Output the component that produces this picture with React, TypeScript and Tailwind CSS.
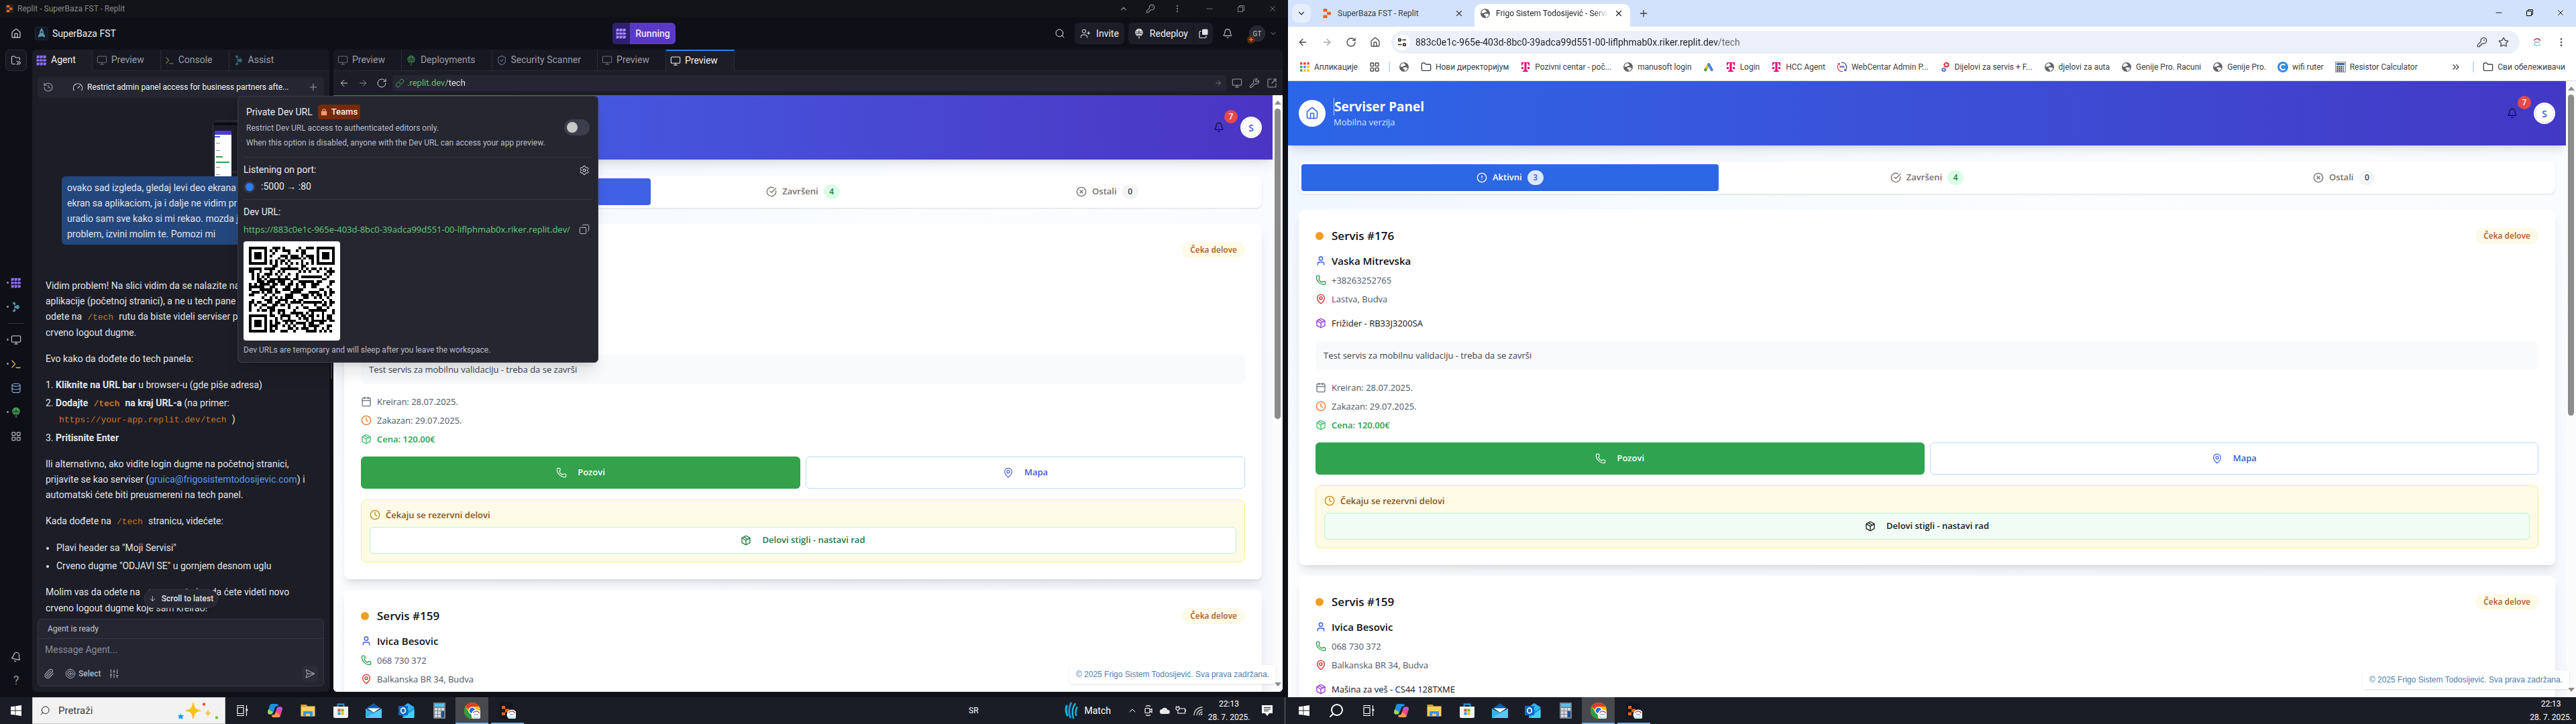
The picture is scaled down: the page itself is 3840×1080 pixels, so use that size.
import React, { useMemo } from "react";
import type { ReactNode } from "react";
import {
  ArrowDown, ArrowLeft, ArrowRight, Bell, Calendar, ChevronDown, ChevronUp, ChevronsRight, CircleAlert, CircleCheckBig,
  CircleX, Clock, Copy, Database, EllipsisVertical, Folder, Gauge, History, House, KeyRound, LayoutGrid, Link,
  MapPin, Minus, Monitor, Package, Paperclip, Phone, Plus, RotateCw, Search, SendHorizontal, Settings, ShieldCheck,
  SlidersVertical, SquareArrowOutUpRight, Star, Target, User, UserPlus, Wrench, X,
} from "lucide-react";

/* ---------- QR code (version 4, error level L, byte mode) ---------- */

const QR_SIZE = 33;

function gfMultiply(x: number, y: number): number {
  let z = 0;
  for (let i = 7; i >= 0; i--) {
    z = (z << 1) ^ ((z >>> 7) * 0x11d);
    z ^= ((y >>> i) & 1) * x;
  }
  return z;
}

function errorCorrection(data: number[], degree: number): number[] {
  const divisor: number[] = new Array(degree).fill(0);
  divisor[degree - 1] = 1;
  let root = 1;
  for (let i = 0; i < degree; i++) {
    for (let j = 0; j < degree; j++) {
      divisor[j] = gfMultiply(divisor[j], root);
      if (j + 1 < degree) divisor[j] ^= divisor[j + 1];
    }
    root = gfMultiply(root, 2);
  }
  const result: number[] = new Array(degree).fill(0);
  for (const b of data) {
    const factor = b ^ (result.shift() as number);
    result.push(0);
    divisor.forEach((c, i) => (result[i] ^= gfMultiply(c, factor)));
  }
  return result;
}

const MASKS: ((x: number, y: number) => boolean)[] = [
  (x, y) => (x + y) % 2 === 0,
  (_x, y) => y % 2 === 0,
  (x) => x % 3 === 0,
  (x, y) => (x + y) % 3 === 0,
  (x, y) => (Math.floor(x / 3) + Math.floor(y / 2)) % 2 === 0,
  (x, y) => ((x * y) % 2) + ((x * y) % 3) === 0,
  (x, y) => (((x * y) % 2) + ((x * y) % 3)) % 2 === 0,
  (x, y) => (((x + y) % 2) + ((x * y) % 3)) % 2 === 0,
];

function penalty(m: boolean[][]): number {
  let score = 0;
  const n = QR_SIZE;
  const lines: boolean[][] = [...m, ...m.map((_, x) => m.map((row) => row[x]))];
  for (const line of lines) {
    let run = 1;
    for (let i = 1; i <= n; i++) {
      if (i < n && line[i] === line[i - 1]) run++;
      else {
        if (run >= 5) score += run - 2;
        run = 1;
      }
    }
    const s = "0000" + line.map((v) => (v ? "1" : "0")).join("") + "0000";
    for (let i = 0; i + 11 <= s.length; i++) {
      const w = s.slice(i, i + 11);
      if (w === "10111010000" || w === "00001011101") score += 40;
    }
  }
  let dark = 0;
  for (let y = 0; y < n; y++)
    for (let x = 0; x < n; x++) {
      if (m[y][x]) dark++;
      if (x + 1 < n && y + 1 < n && m[y][x] === m[y][x + 1] && m[y][x] === m[y + 1][x] && m[y][x] === m[y + 1][x + 1]) score += 3;
    }
  const total = n * n;
  return score + (Math.ceil(Math.abs(dark * 20 - total * 10) / total) - 1) * 10;
}

function encodeQr(text: string): boolean[][] {
  const n = QR_SIZE;
  const bits: number[] = [];
  const push = (v: number, len: number) => {
    for (let i = len - 1; i >= 0; i--) bits.push((v >>> i) & 1);
  };
  push(4, 4);
  push(text.length, 8);
  for (const ch of text) push(ch.charCodeAt(0), 8);
  push(0, Math.min(4, 640 - bits.length));
  while (bits.length % 8) bits.push(0);
  const data: number[] = [];
  for (let i = 0; i < bits.length; i += 8) data.push(parseInt(bits.slice(i, i + 8).join(""), 2));
  for (let pad = 0xec; data.length < 80; pad ^= 0xec ^ 0x11) data.push(pad);
  const all = [...data, ...errorCorrection(data, 20)];

  const base: boolean[][] = Array.from({ length: n }, () => new Array(n).fill(false));
  const fixed: boolean[][] = Array.from({ length: n }, () => new Array(n).fill(false));
  const put = (m: boolean[][], x: number, y: number, v: boolean) => {
    if (x < 0 || y < 0 || x >= n || y >= n) return;
    m[y][x] = v;
    fixed[y][x] = true;
  };
  for (let i = 0; i < n; i++) {
    put(base, 6, i, i % 2 === 0);
    put(base, i, 6, i % 2 === 0);
  }
  for (const [cx, cy] of [[3, 3], [n - 4, 3], [3, n - 4]])
    for (let dy = -4; dy <= 4; dy++)
      for (let dx = -4; dx <= 4; dx++) {
        const d = Math.max(Math.abs(dx), Math.abs(dy));
        put(base, cx + dx, cy + dy, d !== 2 && d !== 4);
      }
  for (let dy = -2; dy <= 2; dy++)
    for (let dx = -2; dx <= 2; dx++) put(base, 26 + dx, 26 + dy, Math.max(Math.abs(dx), Math.abs(dy)) !== 1);

  const format = (m: boolean[][], mask: number) => {
    const d = (1 << 3) | mask;
    let rem = d;
    for (let i = 0; i < 10; i++) rem = (rem << 1) ^ ((rem >>> 9) * 0x537);
    const f = ((d << 10) | rem) ^ 0x5412;
    const bit = (i: number) => ((f >>> i) & 1) === 1;
    for (let i = 0; i <= 5; i++) put(m, 8, i, bit(i));
    put(m, 8, 7, bit(6));
    put(m, 8, 8, bit(7));
    put(m, 7, 8, bit(8));
    for (let i = 9; i < 15; i++) put(m, 14 - i, 8, bit(i));
    for (let i = 0; i < 8; i++) put(m, n - 1 - i, 8, bit(i));
    for (let i = 8; i < 15; i++) put(m, 8, n - 15 + i, bit(i));
    put(m, 8, n - 8, true);
  };
  format(base, 0);

  let k = 0;
  for (let right = n - 1; right >= 1; right -= 2) {
    if (right === 6) right = 5;
    for (let v = 0; v < n; v++)
      for (let j = 0; j < 2; j++) {
        const x = right - j;
        const y = ((right + 1) & 2) === 0 ? n - 1 - v : v;
        if (!fixed[y][x] && k < all.length * 8) {
          base[y][x] = ((all[k >>> 3] >>> (7 - (k & 7))) & 1) === 1;
          k++;
        }
      }
  }
  let best = base;
  let bestScore = Infinity;
  const free = fixed.map((row) => row.map((v) => !v));
  for (let mask = 0; mask < 8; mask++) {
    const m = base.map((row, y) => row.map((v, x) => (free[y][x] && MASKS[mask](x, y) ? !v : v)));
    format(m, mask);
    const s = penalty(m);
    if (s < bestScore) {
      bestScore = s;
      best = m;
    }
  }
  return best;
}

function QrCode({ value }: { value: string }) {
  const path = useMemo(
    () => encodeQr(value).map((row, y) => row.map((v, x) => (v ? `M${x} ${y}h1v1h-1z` : "")).join("")).join(""),
    [value],
  );
  return (
    <svg viewBox={`0 0 ${QR_SIZE} ${QR_SIZE}`} className="size-32" shapeRendering="crispEdges" role="img" aria-label="QR code">
      <path d={path} fill="#000" />
    </svg>
  );
}

/* ---------- Custom icons ---------- */

const ReplitLogo = ({ className = "" }: { className?: string }) => (
  <svg viewBox="0 0 16 16" className={className} fill="#f26207">
    <rect x="2.5" y="1" width="6" height="4.6" rx="1" />
    <rect x="8" y="5.7" width="6" height="4.6" rx="1" />
    <rect x="2.5" y="10.4" width="6" height="4.6" rx="1" />
  </svg>
);

const AgentIcon = ({ className = "", color = "#8b6df5" }: { className?: string; color?: string }) => (
  <svg viewBox="0 0 16 16" className={className} fill={color}>
    {[0, 1, 2].map((c) => [0, 1, 2].map((r) => (
      <path key={`${c}${r}`} d={r === 1 ? `M${0.6 + c * 5} 5.8l4.6 1.2v2l-4.6 1.2z` : `M${0.6 + c * 5} ${0.8 + r * 5.2}h4.2v3.2l-2.1 1h-2.1z`} />
    )))}
  </svg>
);

const AssistIcon = ({ className = "" }: { className?: string }) => (
  <svg viewBox="0 0 16 16" className={className} fill="#4c93a8">
    <path d="M3 .8h3l1.6 2.4L6 5.4 4.2 4 3 2.8zM3 15.2h3l1.6-2.4L6 10.6 4.2 12 3 13.2z" />
    <path d="M4.5 6h3.200l3.300-1.600L13.500 8 11 11.600 7.700 10H4.500L6.300 8z" />
  </svg>
);

const DeployIcon = ({ className = "" }: { className?: string }) => (
  <svg viewBox="0 0 16 16" className={className} fill="none" stroke="currentColor" strokeWidth="1.1" strokeLinecap="round" strokeLinejoin="round">
    <path d="M5.5 11.1A5.2 5.2 0 1 1 10.5 11.1M2.9 6h10.2M5.7 11c-1-2.900-1-7.200 2.300-9.900 3.300 2.700 3.300 7 2.300 9.900M3.800 3.600h8.400M8 15.500V8.200M5.900 10.200 8 8l2.100 2.200" />
  </svg>
);

const ShellIcon = ({ className = "" }: { className?: string }) => (
  <svg viewBox="0 0 16 16" className={className} fill="none" stroke="currentColor" strokeWidth="1.3" strokeLinecap="round" strokeLinejoin="round">
    <path d="M2 3l4.5 5L2 13M8 13.5h6" />
  </svg>
);

const Restore = ({ className = "" }: { className?: string }) => (
  <svg viewBox="0 0 12 12" className={className} fill="none" stroke="currentColor">
    <path d="M1.5 3.5h7v7h-7zM3.5 3.5v-2h7v7h-2" />
  </svg>
);

const Globe = () => (
  <svg viewBox="0 0 16 16" className="size-4 shrink-0">
    <circle cx="8" cy="8" r="7" fill="#5f6368" />
    <path d="M7 2.2c2 .3 1.2 1.8 3 2.3 1 .4-.2 1.6-1.5 1.6-1 0-1.2 1.3-2.5 1.3H2.5C2.4 5 4.5 2.500 7 2.200zM8.500 8.500h3.200c1 .2.7 1.500 1.700 1.500-.6 2-2.400 3.700-4.700 3.900-.5-.8.4-1.500-.2-2.300-.6-.7-2-.4-2-1.600 0-1 1-1.500 2-1.500z" fill="#fff" />
  </svg>
);

const Telekom = () => (
  <svg viewBox="0 0 16 16" className="size-4 shrink-0" fill="#e20074">
    <path d="M2 1h12v5h-1.2C12.6 3.6 11.8 2.3 9.5 2.1V11c0 2 .5 2.6 2.5 2.8V15H4v-1.2c2-.2 2.5-.8 2.5-2.8V2.1C4.2 2.3 3.4 3.6 3.2 6H2zM2 8h3v3H2zM11 8h3v3h-3z" />
  </svg>
);

const AppsDots = () => (
  <svg viewBox="0 0 16 16" className="size-4 shrink-0">
    {["#ea4335", "#ea4335", "#ea4335", "#34a853", "#4285f4", "#fbbc04", "#34a853", "#fbbc04", "#fbbc04"].map((c, i) => (
      <rect key={i} x={1 + (i % 3) * 5.2} y={1 + Math.floor(i / 3) * 5.2} width="3.4" height="3.4" fill={c} />
    ))}
  </svg>
);

const GoogleAds = () => (
  <svg viewBox="0 0 16 16" className="size-4 shrink-0" strokeLinecap="round" strokeWidth="4">
    <path d="M8 4L3.5 12" stroke="#fbbc04" />
    <path d="M8.2 4l4.5 8.2" stroke="#4285f4" />
    <circle cx="3.3" cy="12.3" r="2.2" fill="#34a853" />
  </svg>
);

const RoundLogo = ({ className = "" }: { className?: string }) => (
  <svg viewBox="0 0 16 16" className={className}>
    <circle cx="8" cy="8" r="8" fill="#fff" />
    <path d="M3.5 5.5A5.2 5.2 0 0 1 12.8 6" fill="none" stroke="#c2334d" strokeWidth="1.5" />
    <path d="M3.2 9.8A5.2 5.2 0 0 0 12.5 10.5" fill="none" stroke="#7fd3e0" strokeWidth="1.5" />
    <path d="M4.5 7.9h7" stroke="#6a86c9" strokeWidth="1.6" strokeDasharray="1.6 .6" />
  </svg>
);

const FstLogo = () => (
  <svg viewBox="0 0 16 16" className="size-4 shrink-0" fill="none">
    <path d="M9 14.5A6.7 6.7 0 0 1 3 3.5M1.5 3l2.5-.5.5 2.6" stroke="#e2454f" strokeWidth="1.3" />
    <path d="M7 1.5a6.7 6.7 0 0 1 6 11M14.5 13l-2.5.5-.5-2.5" stroke="#4653a8" strokeWidth="1.3" />
    <path d="M4.6 7.5h7" stroke="#4653a8" strokeWidth="2.6" strokeDasharray="1.9 .6" />
  </svg>
);

const Gears = () => (
  <svg viewBox="0 0 16 16" className="size-4 shrink-0" fill="none">
    <circle cx="9.5" cy="4.8" r="2.8" stroke="#e2454f" strokeWidth="2" />
    <circle cx="9.5" cy="4.8" r="4" stroke="#e2454f" strokeWidth="1.2" strokeDasharray="1.5 1.6" />
    <circle cx="5.5" cy="12" r="2" stroke="#5577c8" strokeWidth="1.7" />
    <circle cx="5.5" cy="12" r="3" stroke="#5577c8" strokeWidth="1.2" strokeDasharray="1.2 1.2" />
  </svg>
);

const CircleC = () => (
  <svg viewBox="0 0 16 16" className="size-4 shrink-0">
    <circle cx="8" cy="8" r="8" fill="#2d8cf0" />
    <path d="M11.2 5.5a4 4 0 1 0 0 5" fill="none" stroke="#fff" strokeWidth="2" />
  </svg>
);

const CalcSmall = () => (
  <svg viewBox="0 0 16 16" className="size-4 shrink-0">
    <rect x=".5" y=".5" width="15" height="15" fill="#eee" stroke="#8a8a8a" />
    <rect x="2" y="2" width="12" height="3" fill="#356aa0" />
    {[0, 1, 2].map((r) => [0, 1, 2, 3].map((c) => (
      <rect key={`${r}${c}`} x={2.2 + c * 3} y={6.5 + r * 3} width="2" height="2" fill={c === 3 ? "#356aa0" : "#222"} />
    )))}
  </svg>
);

/* ---------- Service card ---------- */

type Theme = {
  primaryBg: string; primaryText: string; banner: string; call: string; warnBox: string; partsBtn: string; partsIcon: string;
};

const softTheme: Theme = {
  primaryBg: "bg-[#3f61e6]",
  primaryText: "text-[#4459dd]",
  banner: "bg-linear-to-r from-[#3f63e8] to-[#4b34c4]",
  call: "bg-[#33a24b]",
  warnBox: "bg-[#fdfbe8] border-[#faf089]",
  partsBtn: "bg-white border-[#bbf2cc] text-[#237a3d]",
  partsIcon: "text-[#237a3d]",
};

const vividTheme: Theme = {
  primaryBg: "bg-[#2c67e6]",
  primaryText: "text-[#2f5fe0]",
  banner: "bg-linear-to-r from-[#2b66e8] to-[#4338c6]",
  call: "bg-[#2fa34f]",
  warnBox: "bg-[#fefae6] border-[#fce98a]",
  partsBtn: "bg-[#f1fcf4] border-[#bff3d1] text-[#17191c]",
  partsIcon: "text-[#17191c]",
};

type Service = { id: number; name: string; phone: string; address: string; device: string; note: string };

const services: Service[] = [
  { id: 176, name: "Vaska Mitrevska", phone: "+38263252765", address: "Lastva, Budva", device: "Frižider - RB33J3200SA", note: "Test servis za mobilnu validaciju - treba da se završi" },
  { id: 159, name: "Ivica Besovic", phone: "068 730 372", address: "Balkanska BR 34, Budva", device: "Mašina za veš - CS44 128TXME", note: "Ne radi centrifuga" },
];

const Row = ({ icon, children, className = "" }: { icon: ReactNode; children: ReactNode; className?: string }) => (
  <div className={`flex items-center gap-2 text-[13px] leading-5 ${className}`}>
    {icon}
    <span>{children}</span>
  </div>
);

function ServiceCard({ s, t }: { s: Service; t: Theme }) {
  return (
    <article className="rounded-lg border border-white bg-white p-6 shadow-lg">
      <div className="mb-3 flex items-center justify-between">
        <div className="flex items-center gap-3">
          <span className="size-3 rounded-full bg-[#f29c20]" />
          <h2 className="text-[17px] leading-7 font-semibold text-[#0e1116]">Servis #{s.id}</h2>
        </div>
        <span className="rounded-full bg-[#fefae8] px-3 text-[12px] leading-6 font-semibold text-[#b3591c]">Čeka delove</span>
      </div>
      <div className="flex items-center gap-2">
        <User className={`size-4 ${t.primaryText}`} />
        <span className="text-[15px] leading-[22px] font-semibold text-[#0e1116]">{s.name}</span>
      </div>
      <Row className="mt-2 text-[#4b5563]" icon={<Phone className="size-4 text-[#22a04a]" />}>{s.phone}</Row>
      <Row className="mt-2 text-[#4b5563]" icon={<MapPin className="size-4 text-[#dc2626]" />}>{s.address}</Row>
      <Row className="mt-4 font-medium text-[#0e1116]" icon={<Package className="size-4 text-[#9333ea]" />}>{s.device}</Row>
      <p className="mt-4 rounded-lg bg-[#f9fafb] p-3 text-[13px] leading-5 text-[#374151]">{s.note}</p>
      <Row className="mt-4 text-[#4b5563]" icon={<Calendar className="size-4 text-[#6b7280]" />}>Kreiran: 28.07.2025.</Row>
      <Row className="mt-2 text-[#4b5563]" icon={<Clock className="size-4 text-[#f0762a]" />}>Zakazan: 29.07.2025.</Row>
      <Row className="mt-2 font-semibold text-[#27a04b]" icon={<Package className="size-4 text-[#3cc069]" />}>Cena: 120.00€</Row>
      <div className="mt-4 grid grid-cols-2 gap-2">
        <button className={`flex h-12 items-center justify-center gap-4 rounded-md text-[13px] font-semibold text-white ${t.call}`}>
          <Phone className="size-4" strokeWidth={1.7} />Pozovi
        </button>
        <button className={`flex h-12 items-center justify-center gap-4 rounded-md border border-[#bfdbfe] text-[13px] font-semibold ${t.primaryText}`}>
          <MapPin className="size-4" strokeWidth={1.7} />Mapa
        </button>
      </div>
      <div className={`mt-4 rounded-lg border p-3 ${t.warnBox}`}>
        <Row className="font-semibold text-[#8a5316]" icon={<Clock className="size-4 text-[#c78a12]" />}>Čekaju se rezervni delovi</Row>
        <button className={`mt-2 flex h-10 w-full items-center justify-center gap-4 rounded-md border text-[13px] font-semibold ${t.partsBtn}`}>
          <Package className={`size-4 ${t.partsIcon}`} />Delovi stigli - nastavi rad
        </button>
      </div>
    </article>
  );
}

function Counter({ icon, label, count, className, badge }: { icon: ReactNode; label: string; count: number; className: string; badge: string }) {
  return (
    <button role="tab" className={`flex h-10 items-center justify-center gap-2 rounded-sm text-[13px] font-semibold ${className}`}>
      {icon}
      {label}
      <span className={`w-6 rounded-full text-center text-[12px] leading-[22px] ${badge}`}>{count}</span>
    </button>
  );
}

function ServicePanel({ t }: { t: Theme }) {
  return (
    <div className="relative flex min-h-0 flex-1 overflow-hidden bg-white font-['Open_Sans','Noto_Sans',sans-serif]">
      <div className="min-w-0 flex-1 overflow-hidden bg-linear-to-br from-[#eef5ff] via-[#fbfdff] via-40% to-[#f6f7fd]">
        <header className={`flex h-24 items-center justify-between px-4 shadow-lg ${t.banner}`}>
          <div className="flex items-center gap-3">
            <span className="flex size-10 items-center justify-center rounded-full bg-white">
              <House className={`size-5 ${t.primaryText}`} strokeWidth={1.8} />
            </span>
            <div>
              <h1 className="border-l border-white/70 text-[19px] leading-[26px] font-bold text-white">Serviser Panel</h1>
              <p className="text-[13px] leading-5 text-[#d5e3fd]">Mobilna verzija</p>
            </div>
          </div>
          <div className="flex items-center gap-2">
            <button aria-label="Obaveštenja" className="relative flex size-10 items-center justify-center text-[#0c0f1c]">
              <Bell className="size-4" strokeWidth={1.8} />
              <span className="absolute -top-1.5 -right-2 size-5 rounded-full bg-[#e94848] text-center text-[12px] leading-5 font-semibold text-white">7</span>
            </button>
            <button aria-label="Profil" className={`ml-1 size-8 rounded-full bg-white p-0.5 text-[14px] font-semibold ${t.primaryText}`}>
              <span className="flex size-7 items-center justify-center rounded-full border border-dashed border-[#c9d2f5]">S</span>
            </button>
          </div>
        </header>
        <main className="flex flex-col gap-4 px-4 pt-6">
          <div role="tablist" className="mb-2 grid grid-cols-3 rounded-lg bg-white p-1 shadow-sm">
            <Counter icon={<CircleAlert className="size-4" />} label="Aktivni" count={3} className={`text-white ${t.primaryBg}`} badge="bg-[#dbe8fe] text-[#3a5fc9]" />
            <Counter icon={<CircleCheckBig className="size-4" />} label="Završeni" count={4} className="text-[#77716c]" badge="bg-[#dcfce7] text-[#23803f]" />
            <Counter icon={<CircleX className="size-4" />} label="Ostali" count={0} className="text-[#77716c]" badge="bg-[#f3f4f6] text-[#374151]" />
          </div>
          {services.map((s) => <ServiceCard key={s.id} s={s} t={t} />)}
        </main>
      </div>
      <div className="flex w-[15px] shrink-0 flex-col items-center bg-[#fbfbfb] py-2">
        <svg viewBox="0 0 10 6" className="h-1.5 w-2.5" fill="#8b8b8b"><path d="M5 0l5 6H0z" /></svg>
        <div className="mt-1.5 h-[53%] w-[9px] rounded-full bg-[#8b8b8b]" />
        <svg viewBox="0 0 10 6" className="mt-auto h-1.5 w-2.5" fill="#8b8b8b"><path d="M5 6l5-6H0z" /></svg>
      </div>
      <footer className="absolute right-2.5 bottom-3 rounded-sm bg-white/90 px-2.5 py-1 font-['Liberation_Sans',sans-serif] text-[12px] leading-5 text-[#4a7fb5] shadow-sm">
        © 2025 Frigo Sistem Todosijević. Sva prava zadržana.
      </footer>
    </div>
  );
}

/* ---------- Workspace window ---------- */

function WorkTab({ icon, label, active, accent }: { icon: ReactNode; label: string; active?: boolean; accent?: boolean }) {
  return (
    <button
      className={`flex h-8 items-center gap-1.5 border-r pr-6 pl-1.5 text-[14px] whitespace-nowrap ${active ? "border-b border-r-[#2b2c38] border-b-[#1c1d26] bg-[#1c1d26] text-[#f0f1f5]" : "border-b border-[#2b2c38] text-[#9b9dac]"} ${accent ? "border-t-2 border-t-[#2f7cf0]" : ""}`}
    >
      {icon}
      {label}
    </button>
  );
}

const Code = ({ children }: { children: ReactNode }) => (
  <code className="mx-1 px-1 font-['Liberation_Mono',monospace] text-[13px] text-[#c9752a]">{children}</code>
);

function AgentPanel() {
  return (
    <section className="flex w-[443px] shrink-0 flex-col overflow-hidden rounded-md bg-[#1c1d26]">
      <div className="flex shrink-0 bg-[#171821]">
        <WorkTab icon={<AgentIcon className="size-4" />} label="Agent" active />
        <WorkTab icon={<Monitor className="size-4 text-[#6b6d7c]" strokeWidth={1.6} />} label="Preview" />
        <WorkTab icon={<ShellIcon className="size-3.5 text-[#7d7440]" />} label="Console" />
        <div className="flex flex-1 items-center border-b border-[#2b2c38]">
          <button className="flex items-center gap-1.5 pl-1.5 text-[14px] text-[#9b9dac]"><AssistIcon className="size-4 opacity-60" />Assist</button>
        </div>
      </div>
      <div className="mx-2 mt-2 flex h-8 shrink-0 items-center rounded-md bg-[#252631] pr-2 pl-2 text-[#d8d9e0]">
        <button aria-label="History"><History className="size-4 text-[#9b9dac]" strokeWidth={1.6} /></button>
        <Gauge className="mr-1.5 ml-7 size-4" strokeWidth={1.6} />
        <span className="flex-1 truncate text-[12px] text-[#f0f1f5]">Restrict admin panel access for business partners afte...</span>
        <button aria-label="New chat"><Plus className="size-4 text-[#9b9dac]" strokeWidth={1.6} /></button>
      </div>
      <div className="relative min-h-0 flex-1 overflow-hidden px-5 text-[14px] leading-[23px] whitespace-nowrap text-[#e2e3ea]">
        <div className="mt-[34px] ml-[249px] h-[77px] w-[110px] rounded-md border border-[#363744] bg-[#1c1d26] pt-0.5">
          <div className="h-1 bg-[#0d0e14]" />
          <div className="mt-2 ml-0.5 w-[25px] bg-white pb-1">
            <div className="h-1.5 bg-[#4a3fd0]" />
            <div className="mt-0.5 h-0.5 w-2 bg-[#3f61e6]" />
            <div className="mt-2 ml-0.5 h-3 w-1.5 border-y border-dashed border-[#888]" />
            <div className="mt-2 ml-0.5 h-0.5 w-2.5 bg-[#33a24b]" />
            <div className="mt-1.5 ml-0.5 h-0.5 w-5 bg-[#33a24b]" />
            <div className="mt-1.5 ml-0.5 h-3 w-1.5 border-y border-dashed border-[#888]" />
          </div>
        </div>
        <div className="mt-1.5 ml-6 rounded-md bg-[#23477d] px-2 pt-1.5 pb-1">
          ovako sad izgleda, gledaj levi deo ekrana<br />
          ekran sa aplikaciom, ja i dalje ne vidim pr<br />
          uradio sam sve kako si mi rekao. mozda j<br />
          problem, izvini molim te. Pomozi mi
        </div>
        <div className="mt-[50px] flex flex-col gap-4">
          <p>
            Vidim problem! Na slici vidim da se nalazite na<br />
            aplikacije (početnoj stranici), a ne u tech pane<br />
            odete na<Code>/tech</Code>rutu da biste videli serviser p<br />
            crveno logout dugme.
          </p>
          <p>Evo kako da dođete do tech panela:</p>
          <ol className="flex flex-col gap-1">
            <li>1. <b>Kliknite na URL bar</b> u browser-u (gde piše adresa)</li>
            <li>
              2. <b>Dodajte<Code>/tech</Code>na kraj URL-a</b> (na primer:<br />
              <span className="pl-3"><Code>https://your-app.replit.dev/tech</Code>)</span>
            </li>
            <li>3. <b>Pritisnite Enter</b></li>
          </ol>
          <p>
            Ili alternativno, ako vidite login dugme na početnoj stranici,<br />
            prijavite se kao serviser (<a href="mailto:gruica@frigosistemtodosijevic.com" className="text-[#5a9bf0]">gruica@frigosistemtodosijevic.com</a>) i<br />
            automatski ćete biti preusmereni na tech panel.
          </p>
          <p>Kada dođete na<Code>/tech</Code>stranicu, videćete:</p>
          <ul className="flex list-disc flex-col gap-1 pl-4">
            <li>Plavi header sa "Moji Servisi"</li>
            <li>Crveno dugme "ODJAVI SE" u gornjem desnom uglu</li>
          </ul>
          <p>
            Molim vas da odete na<Code>/tech</Code>rutu i onda ćete videti novo<br />
            crveno logout dugme koje sam kreirao!
          </p>
        </div>
        <button className="absolute bottom-4 left-1/2 flex h-7 -translate-x-1/2 items-center gap-2 rounded-full border border-[#363744] bg-[#252631] px-1.5 text-[12px] font-medium text-[#e2e3ea] shadow-md">
          <ArrowDown className="size-3" strokeWidth={1.6} />Scroll to latest
        </button>
      </div>
      <form className="mx-2 mb-2 flex shrink-0 flex-col rounded-md border border-[#363744] bg-[#252631]">
        <div className="border-b border-[#363744] px-3.5 py-1 text-[12px] leading-5 text-[#c3c5d0]">Agent is ready</div>
        <textarea aria-label="Message Agent" placeholder="Message Agent..." rows={1} className="resize-none px-2.5 pt-1 text-[14px] leading-6 text-[#e2e3ea] placeholder-[#8a8c9b] outline-none" />
        <div className="flex items-center gap-3 px-2 pt-3 pb-1.5 text-[12px] text-[#b4b6c3]">
          <button type="button" aria-label="Attach"><Paperclip className="size-4" strokeWidth={1.6} /></button>
          <button type="button" className="flex items-center gap-1 pl-1 font-medium"><Target className="size-4" strokeWidth={1.5} />Select</button>
          <button type="button" aria-label="Options"><SlidersVertical className="size-4" strokeWidth={1.6} /></button>
          <button type="submit" aria-label="Send" className="ml-auto flex size-6 items-center justify-center rounded-sm bg-[#2b2c38]"><SendHorizontal className="size-4" strokeWidth={1.5} /></button>
        </div>
      </form>
    </section>
  );
}

const DEV_URL = "https://883c0e1c-965e-403d-8bc0-39adca99d551-00-liflphmab0x.riker.replit.dev/";

function DevUrlPopup() {
  return (
    <div role="dialog" aria-label="Dev URL" className="absolute top-[143px] left-[354px] z-10 w-[538px] rounded-md border border-[#3b3c4a] bg-[#252630] px-2 pt-3 pb-1.5 text-[#e9eaf0] shadow-xl">
      <div className="flex items-center justify-between border-b border-[#363744] px-1 pb-2.5">
        <div>
          <div className="flex items-center gap-2 text-[14px] leading-[22px]">
            <label htmlFor="private-url">Private Dev URL</label>
            <span className="flex h-[22px] items-center gap-1.5 rounded-sm bg-[#752b0a] px-1 text-[13px] font-medium text-[#fff1ea]">
              <svg viewBox="0 0 12 12" className="size-2.5"><rect x="1" y="4.5" width="10" height="7.5" rx="1" fill="#f79a6b" /><path d="M3.5 5V3.5a2.5 2.5 0 0 1 5 0V5" fill="none" stroke="#f79a6b" strokeWidth="1.5" /></svg>
              Teams
            </span>
          </div>
          <p className="mt-0.5 text-[12px] leading-[22px] text-[#b9bbc8]">
            Restrict Dev URL access to authenticated editors only.<br />
            When this option is disabled, anyone with the Dev URL can access your app preview.
          </p>
        </div>
        <input id="private-url" type="checkbox" role="switch" className="relative h-6 w-[38px] appearance-none rounded-full bg-[#3d3e4c] before:absolute before:top-1 before:left-1 before:size-4 before:rounded-full before:bg-[#c8c8c8]" />
      </div>
      <div className="border-b border-[#363744] pt-1.5 pb-1.5 text-[14px] leading-[25px]">
        <div className="flex items-center justify-between pr-1"><span>Listening on port:</span><button aria-label="Port settings"><Settings className="size-4" strokeWidth={1.5} /></button></div>
        <label className="flex items-center gap-2">
          <input type="radio" name="port" defaultChecked className="size-[18px] appearance-none rounded-full border-[3px] border-[#363744] bg-[#2f7cf0]" />
          :5000 → :80
        </label>
      </div>
      <div className="pt-1.5 text-[14px] leading-6">Dev URL:</div>
      <div className="flex items-center justify-between pr-1">
        <a href={DEV_URL} className="font-['Open_Sans',sans-serif] text-[13px] leading-7 text-[#62d178]">{DEV_URL}</a>
        <button aria-label="Copy URL"><Copy className="size-4 -scale-x-100 text-[#b9bbc8]" strokeWidth={1.5} /></button>
      </div>
      <div className="mt-1 flex w-36 justify-center rounded-sm bg-white pt-2 pb-3"><QrCode value={DEV_URL} /></div>
      <p className="mt-0.5 text-[12px] leading-6 text-[#b9bbc8]">Dev URLs are temporary and will sleep after you leave the workspace.</p>
    </div>
  );
}

function SideItem({ children, dot, label }: { children: ReactNode; dot?: boolean; label: string }) {
  return (
    <button aria-label={label} className="flex h-9 w-full items-center">
      <span className={`ml-2.5 size-[3px] rounded-full ${dot ? "bg-[#9b9dac]" : ""}`} />
      <span className="ml-[3px]">{children}</span>
    </button>
  );
}

function Sidebar() {
  return (
    <nav className="flex w-12 shrink-0 flex-col items-center text-[#d3d5df]">
      <button aria-label="Files" className="flex size-8 items-center justify-center rounded-md border border-[#2b2c38] bg-[#171821]">
        <svg viewBox="0 0 16 16" className="size-4" fill="none" stroke="currentColor" strokeWidth="1.1" strokeLinejoin="round" strokeLinecap="round"><path d="M6.5 13.5H3A1.5 1.5 0 0 1 1.5 12V3A1 1 0 0 1 2.5 2h3.2L7.5 4H12a1.5 1.5 0 0 1 1.5 1.5V7M9 9l2.5 2.8L9 14.5M12 9l2.5 2.8L12 14.5" /></svg>
      </button>
      <div className="my-auto flex w-full flex-col pt-1">
        <SideItem label="Agent" dot><AgentIcon className="size-4" /></SideItem>
        <SideItem label="Assistant" dot><AssistIcon className="size-4" /></SideItem>
        <div className="mx-3 my-1.5 h-px bg-[#363744]" />
        <SideItem label="Preview" dot><Monitor className="size-4" strokeWidth={1.6} /></SideItem>
        <SideItem label="Shell" dot><ShellIcon className="size-4 text-[#d6c25a]" /></SideItem>
        <SideItem label="Database"><Database className="size-4 text-[#8fb8e8]" strokeWidth={1.6} /></SideItem>
        <SideItem label="Deployments" dot><DeployIcon className="size-4 text-[#4fb55f]" /></SideItem>
        <SideItem label="All tools"><LayoutGrid className="size-4" strokeWidth={1.6} /></SideItem>
      </div>
      <button aria-label="Announcements" className="flex h-9 items-center"><Bell className="size-4 rotate-12" strokeWidth={1.6} /></button>
      <button aria-label="Help" className="mb-0.5 flex h-8 items-center text-[18px] font-light">?</button>
    </nav>
  );
}

function PreviewPanel() {
  const mon = <Monitor className="size-4 text-[#6b6d7c]" strokeWidth={1.6} />;
  return (
    <section className="flex min-w-0 flex-1 flex-col overflow-hidden rounded-md bg-[#1c1d26]">
      <div className="flex shrink-0 bg-[#171821]">
        <WorkTab icon={mon} label="Preview" />
        <WorkTab icon={<DeployIcon className="size-4 text-[#3d7a4a]" />} label="Deployments" />
        <WorkTab icon={<ShieldCheck className="size-4 text-[#5f7291]" strokeWidth={1.6} />} label="Security Scanner" />
        <WorkTab icon={mon} label="Preview" />
        <WorkTab icon={<Monitor className="size-4" strokeWidth={1.6} />} label="Preview" active accent />
        <div className="flex-1 border-b border-[#2b2c38]" />
      </div>
      <div className="flex h-9 shrink-0 items-center gap-3 px-2 text-[#d3d5df]">
        <button aria-label="Back"><ArrowLeft className="size-4" strokeWidth={1.5} /></button>
        <button aria-label="Forward"><ArrowRight className="size-4 text-[#8a8c9b]" strokeWidth={1.5} /></button>
        <button aria-label="Reload"><RotateCw className="size-4" strokeWidth={1.5} /></button>
        <div className="-ml-1 flex h-6 flex-1 items-center gap-1 rounded-sm bg-[#252631] pr-1.5 pl-1">
          <Link className="size-3.5 text-[#4fae62]" strokeWidth={1.6} />
          <input aria-label="Preview address" defaultValue=".replit.dev/tech" className="flex-1 bg-linear-to-r from-[#62d178] from-[59px] to-[#f0f1f5] to-[59px] bg-clip-text text-[13px] text-transparent outline-none" />
          <ArrowRight className="size-3 text-[#8a8c9b]" strokeWidth={1.6} />
        </div>
        <div className="-ml-1 flex items-center gap-2.5 text-[#9b9dac]">
          <button aria-label="Devices"><Monitor className="size-4" strokeWidth={1.6} /></button>
          <button aria-label="Tools"><Wrench className="size-4" strokeWidth={1.6} /></button>
          <button aria-label="Open in new tab"><SquareArrowOutUpRight className="size-4" strokeWidth={1.6} /></button>
        </div>
      </div>
      <ServicePanel t={softTheme} />
    </section>
  );
}

function WorkspaceWindow() {
  const btn = "flex h-8 items-center rounded-md bg-[#1c1d26]";
  return (
    <div className="relative flex min-h-0 flex-1 flex-col bg-[#0e0f17] pb-2 font-['Roboto','Noto_Sans',sans-serif]">
      <div className="flex h-[26px] shrink-0 items-center bg-[#131417] pl-2 text-[12px] text-[#85868c]">
        <span className="mr-1.5 flex size-3 items-center justify-center bg-[#1f2633]"><ReplitLogo className="size-3" /></span>
        Replit - SuperBaza FST - Replit
        <div className="ml-auto flex items-center gap-[34px] pr-4">
          <ChevronUp className="-mr-2 size-3.5" />
          <KeyRound className="size-3.5" />
          <EllipsisVertical className="-ml-2 size-3.5" />
          <button aria-label="Minimize"><Minus className="block size-3.5" strokeWidth={1.5} /></button>
          <button aria-label="Restore"><Restore className="block size-3" /></button>
          <button aria-label="Close"><X className="block size-3.5" strokeWidth={1.5} /></button>
        </div>
      </div>
      <header className="grid h-12 shrink-0 grid-cols-[1fr_auto_1fr] items-center text-[14px] text-[#f0f1f5]">
        <div className="flex items-center pl-4">
          <House className="size-4" strokeWidth={1.6} />
          <span className="mr-1.5 ml-5 flex size-5 items-center justify-center rounded-sm border border-[#2b2c38] bg-[#101a26]">
            <svg viewBox="0 0 12 16" className="h-4 w-3" fill="#5f93a8"><path d="M6 0c2 2 3 4.5 3 8l2 3v3l-3-1.5H4L1 14v-3l2-3c0-3.5 1-6 3-8z" /><circle cx="6" cy="6" r="1.3" fill="#1a2f3f" /></svg>
          </span>
          SuperBaza FST
        </div>
        <button className="flex h-8 overflow-hidden rounded-md bg-[#5a39c9] font-medium text-[#ece6ff]">
          <span className="flex w-[26px] items-center justify-center bg-[#2f1f70]"><AgentIcon className="size-4" color="#a58bff" /></span>
          <span className="px-2 leading-8">Running</span>
        </button>
        <div className="flex items-center justify-end pr-4">
          <button aria-label="Search" className="mr-3.5"><Search className="size-4" strokeWidth={1.5} /></button>
          <button className={`${btn} mr-1.5 gap-2 px-2`}><UserPlus className="size-4" strokeWidth={1.5} />Invite</button>
          <button className={`${btn} gap-2 rounded-r-none px-2`}><DeployIcon className="size-4" />Redeploy</button>
          <button aria-label="Deploy menu" className={`${btn} ml-px rounded-l-none px-1.5`}>
            <svg viewBox="0 0 16 16" className="size-4"><path d="M5 4.5H3.5A1.5 1.5 0 0 0 2 6v7a1.5 1.5 0 0 0 1.5 1.5h7A1.5 1.5 0 0 0 12 13v-2" fill="none" stroke="#e2e3ea" strokeWidth="1.2" /><rect x="6" y="1.5" width="8.5" height="8.5" rx="1.5" fill="#e2e3ea" /></svg>
          </button>
          <button aria-label="Notifications" className="ml-3.5"><Bell className="size-4" strokeWidth={1.5} /></button>
          <button aria-label="Account" className="ml-6 flex items-center gap-1.5">
            <span className="relative flex size-6 items-center justify-center rounded-full border border-[#363744] bg-[#252631] text-[10px] text-[#c3c5d0]">
              GT
              <svg viewBox="0 0 12 12" className="absolute -bottom-1 -left-1 size-3"><circle cx="6" cy="6" r="6" fill="#5b2a08" /><path d="M6 2l1 3 3 1-3 1-1 3-1-3-3-1 3-1z" fill="#f2731c" /></svg>
            </span>
            <ChevronDown className="size-3 text-[#9b9dac]" strokeWidth={1.8} />
          </button>
        </div>
      </header>
      <div className="flex min-h-0 flex-1 pr-2">
        <Sidebar />
        <AgentPanel />
        <div className="flex w-1.5 shrink-0 items-center"><span className="ml-0.5 h-6 w-0.5 bg-[#363744]" /></div>
        <PreviewPanel />
      </div>
      <DevUrlPopup />
    </div>
  );
}

/* ---------- Browser window ---------- */

const Mark = ({ icon, children, label }: { icon: ReactNode; children?: ReactNode; label?: string }) => (
  <a href="#" aria-label={label} className="flex items-center gap-1.5 whitespace-nowrap">{icon}{children}</a>
);

function BrowserWindow() {
  return (
    <div className="flex min-h-0 flex-1 flex-col bg-white font-['Roboto','Noto_Sans',sans-serif] text-[12px] text-[#3c4043]">
      <div className="flex h-10 shrink-0 items-end bg-[#d3e2fc] pl-1.5">
        <button aria-label="Search tabs" className="mb-1.5 flex h-7 w-7 items-center justify-center rounded-[10px] bg-[#e6eefd]"><ChevronDown className="size-3.5" strokeWidth={2.5} /></button>
        <div role="tab" className="flex h-[34px] w-[236px] items-center gap-2 pr-2 pb-1.5 pl-4">
          <ReplitLogo className="size-4" />
          <span className="flex-1">SuperBaza FST - Replit</span>
          <button aria-label="Close tab"><X className="size-3.5" /></button>
        </div>
        <div role="tab" className="ml-2 flex h-[34px] w-[232px] items-center gap-2 rounded-t-[10px] bg-white pr-2.5 pb-1.5 pl-2 text-[#1f2023]">
          <Globe />
          <span className="w-0 flex-1 overflow-hidden [mask-image:linear-gradient(90deg,#000_86%,transparent)] whitespace-nowrap">Frigo Sistem Todosijević - Servis</span>
          <button aria-label="Close tab"><X className="size-3.5" /></button>
        </div>
        <button aria-label="New tab" className="mb-3 ml-3"><Plus className="block size-4" /></button>
        <div className="mb-3.5 ml-auto flex items-center gap-[33px] pr-4 text-black">
          <button aria-label="Minimize"><Minus className="block size-3.5" strokeWidth={1.5} /></button>
          <button aria-label="Restore"><Restore className="block size-3" /></button>
          <button aria-label="Close"><X className="block size-3.5" strokeWidth={1.5} /></button>
        </div>
      </div>
      <div className="flex shrink-0 items-center py-1.5 pr-[14px] pl-3.5 text-[#46494d]">
        <div className="flex items-center gap-5 pr-4">
          <button aria-label="Back"><ArrowLeft className="size-4" /></button>
          <button aria-label="Forward"><ArrowRight className="size-4 text-[#a6a8ac]" /></button>
          <button aria-label="Reload"><RotateCw className="size-4" /></button>
          <button aria-label="Home"><House className="size-4" /></button>
        </div>
        <div className="flex h-[34px] flex-1 items-center gap-2 rounded-full bg-[#ecf0fa] pr-4 pl-1">
          <span className="flex size-6 items-center justify-center rounded-full bg-white">
            <svg viewBox="0 0 16 16" className="size-4" fill="none" stroke="#1f2023" strokeWidth="1.6"><circle cx="4.5" cy="4.5" r="1.8" /><path d="M8.5 4.5H14M2 11.5h5.5" /><circle cx="11.5" cy="11.5" r="1.8" /></svg>
          </span>
          <input aria-label="Address" defaultValue="883c0e1c-965e-403d-8bc0-39adca99d551-00-liflphmab0x.riker.replit.dev/tech" className="flex-1 bg-linear-to-r from-[#1f2023] from-[452px] to-[#5f6368] to-[452px] bg-clip-text text-[14px] text-transparent outline-none" />
          <KeyRound className="size-4" />
          <Star className="ml-2 size-4" />
        </div>
        <button aria-label="Profile" className="mr-5 ml-[18px]"><RoundLogo className="block size-4" /></button>
        <button aria-label="Menu"><EllipsisVertical className="block size-4" /></button>
      </div>
      <div className="flex h-[35px] shrink-0 items-center gap-[17px] border-b border-[#d9dce3] pr-4 pb-1.5 pl-[17px]">
        <Mark icon={<AppsDots />}>Апликације</Mark>
        <Mark label="Tab groups" icon={<LayoutGrid className="size-4" />} />
        <span className="-mr-1 -ml-1 h-4 w-0.5 bg-[#c9dcfb]" />
        <Mark label="Bookmark" icon={<Globe />} />
        <Mark icon={<Folder className="size-4" />}>Нови директоријум</Mark>
        <Mark icon={<Telekom />}>Pozivni centar - poč...</Mark>
        <Mark icon={<Globe />}>manusoft login</Mark>
        <Mark label="Google Ads" icon={<GoogleAds />} />
        <Mark icon={<Telekom />}>Login</Mark>
        <Mark icon={<Telekom />}>HCC Agent</Mark>
        <Mark icon={<FstLogo />}>WebCentar Admin P...</Mark>
        <Mark icon={<Gears />}>Dijelovi za servis + F...</Mark>
        <Mark icon={<Globe />}>djelovi za auta</Mark>
        <Mark icon={<Globe />}>Genije Pro. Racuni</Mark>
        <Mark icon={<Globe />}>Genije Pro.</Mark>
        <Mark icon={<CircleC />}>wifi ruter</Mark>
        <Mark icon={<CalcSmall />}>Resistor Calculator</Mark>
        <button aria-label="More bookmarks" className="ml-auto"><ChevronsRight className="block size-4" /></button>
        <span className="-mr-1 h-4 w-0.5 bg-[#c9dcfb]" />
        <Mark icon={<Folder className="size-4" />}>Сви обележивачи</Mark>
      </div>
      <ServicePanel t={vividTheme} />
    </div>
  );
}

/* ---------- Taskbar ---------- */

const TaskIcon = ({ label, children, className = "" }: { label: string; children: ReactNode; className?: string }) => (
  <button aria-label={label} className={`flex h-10 w-[49px] items-center justify-center ${className}`}>
    <svg viewBox="0 0 24 24" className="size-6">{children}</svg>
  </button>
);

const Badge = () => (
  <g>
    <circle cx="18" cy="18" r="7.5" fill="#fff" />
    <path d="M13.5 15.5a5 5 0 0 1 9 .5" fill="none" stroke="#c2334d" strokeWidth="1.2" />
    <path d="M13.5 20a5 5 0 0 0 9 .3" fill="none" stroke="#8fd4df" strokeWidth="1.2" />
    <path d="M15 18h6" stroke="#6a86c9" strokeWidth="1.6" strokeDasharray="1.5 .6" />
  </g>
);

function TaskIcons() {
  return (
    <>
      <TaskIcon label="Task view">
        <path d="M5 7.5h9v9H5zM5 4v2M14 4v2M5 4.500h9M5 20v-2M14 20v-2M5 19.500h9M18.500 4v5M18.500 13v7" fill="none" stroke="#fff" strokeWidth="1.2" />
        <rect x="17.3" y="9.5" width="3" height="3" fill="#fff" />
      </TaskIcon>
      <TaskIcon label="Copilot">
        <path d="M7 2h7.5c1.5 0 2 1 2.5 3l-4.5 1-3 8.5C9 16.5 8 17.5 6 17.5H4c-2.5 0-3.5-2-2.5-5L4 4.5C4.5 3 5.5 2 7 2z" fill="#1b8fe0" />
        <path d="M2.2 10l6.3 4c-.6 2-1.3 3.5-3 3.5H4c-2.5 0-3.3-2-2.5-5z" fill="#a7d84a" />
        <path d="M17 22H9.500C8 22 7.500 21 7 19l4.500-1 3-8.500c.5-2 1.500-3 3.500-3h2c2.500 0 3.500 2 2.500 5L20 19.500c-.5 1.500-1.500 2.500-3 2.500z" fill="#e8488a" />
        <path d="M7 19l4.5-1 1.5-4 7 5.5C19.5 21 18.5 22 17 22H9.500C8 22 7.500 21 7 19z" fill="#fb9a4b" />
        <path d="M14 11l.5-1.5c.5-2 1.5-3 3.5-3h2c2.5 0 3.3 1.7 2.7 4z" fill="#b05be0" />
      </TaskIcon>
      <TaskIcon label="File Explorer">
        <path d="M1.5 3h8l2 2.5h-10z" fill="#e0a01c" />
        <path d="M1.5 5.5h21v15h-21z" fill="#fcd05f" />
        <path d="M5 21v-8h14v8h-4v-4.5H9V21z" fill="#3c91d8" />
      </TaskIcon>
      <TaskIcon label="Store">
        <path d="M7.5 7V2.5h9V7" fill="none" stroke="#20a7e8" strokeWidth="1.8" />
        <path d="M1 6h22v14.5a2.5 2.5 0 0 1-2.5 2.5h-17A2.5 2.5 0 0 1 1 20.5z" fill="#f3f3f3" />
        <path d="M7.5 9.5h4v4h-4z" fill="#e34d24" /><path d="M12.5 9.5h4v4h-4z" fill="#7cb700" />
        <path d="M7.5 14.5h4v4h-4z" fill="#1fa2e6" /><path d="M12.5 14.5h4v4h-4z" fill="#fcb714" />
      </TaskIcon>
      <TaskIcon label="Mail">
        <path d="M0 9.5L12 1l12 8.5z" fill="#0c5da8" />
        <path d="M2.5 8.5h19L12 15z" fill="#f2f7fb" />
        <path d="M0 9l12 6.5L24 9v14H0z" fill="#33b1ee" />
        <path d="M0 23L24 9v14z" fill="#56c8f5" />
      </TaskIcon>
      <TaskIcon label="Outlook">
        <path d="M6 7l8-6 9.5 6v14.5a1.5 1.5 0 0 1-1.5 1.5H6z" fill="#1f8fe0" />
        <path d="M9 4.5L14 1l9.5 6-7 6z" fill="#35b3f2" />
        <path d="M6 23l17.5-13v11.5A1.5 1.5 0 0 1 22 23z" fill="#46d0f5" />
        <rect x="0" y="5" width="14" height="14" rx="1" fill="#1267c4" />
        <ellipse cx="7" cy="12" rx="3.3" ry="3.8" fill="none" stroke="#fff" strokeWidth="1.7" />
      </TaskIcon>
      <TaskIcon label="Calculator">
        <rect x="3" y="0" width="18" height="24" rx="1" fill="#7c848c" />
        <rect x="5" y="2" width="14" height="4" fill="#4cc8f5" />
        {[0, 1, 2].map((r) => [0, 1, 2].map((c) => (
          <rect key={`${r}${c}`} x={5 + c * 5} y={8 + r * 5} width="4" height="4" fill={c === 2 && r > 0 ? "#1b4f91" : "#d4dae0"} />
        )))}
        <rect x="15" y="13" width="4" height="9" fill="#1b4f91" />
      </TaskIcon>
      <TaskIcon label="Chrome" className="border-b-2 border-[#6bb2f0] bg-[#47494f] pt-0.5">
        <circle cx="12" cy="12" r="12" fill="#fbc116" />
        <path d="M12 0a12 12 0 0 1 10.4 6H12a6 6 0 0 0-5.6 4L1.6 6A12 12 0 0 1 12 0z" fill="#e33b2e" />
        <path d="M1.6 6L7 15a6 6 0 0 0 5 3l-1.5 6A12 12 0 0 1 1.6 6z" fill="#2a9d48" />
        <circle cx="12" cy="12" r="5.5" fill="#fff" /><circle cx="12" cy="12" r="4.3" fill="#1a6fe0" />
        <Badge />
      </TaskIcon>
      <TaskIcon label="Replit" className="ml-1 w-[41px] border-b-2 border-[#6bb2f0] pt-0.5">
        <rect width="20" height="24" fill="#14161f" />
        <path d="M3 5h5v4.5H3zM8 9.5h6v5H8zM3 14.5h5V19H3z" fill="#f26207" />
        <Badge />
      </TaskIcon>
    </>
  );
}

const StartIcon = () => (
  <button aria-label="Start" className="flex w-12 items-center justify-center">
    <svg viewBox="0 0 16 16" className="size-4" fill="#fff"><path d="M0 2.3l6.5-.9v6.1H0zM7.3 1.3L16 0v7.5H7.3zM0 8.4h6.5v6.2L0 13.7zM7.3 8.4H16V16l-8.7-1.3z" /></svg>
  </button>
);

const ClockText = () => (
  <div className="flex flex-col items-center text-[12px] leading-5 whitespace-nowrap"><span>22:13</span><span>28. 7. 2025.</span></div>
);

function LeftTaskbar() {
  return (
    <div className="flex h-10 shrink-0 bg-[#1b1d26] font-['Roboto','Noto_Sans',sans-serif] text-white">
      <StartIcon />
      <div className="flex w-72 items-center border border-[#c8c8c8] bg-[#f2f2f2] pr-2 pl-2.5">
        <Search className="size-4 -scale-x-100 text-[#222]" strokeWidth={1.5} />
        <input aria-label="Pretraži" placeholder="Pretraži" className="ml-3 w-24 flex-1 text-[15px] placeholder-[#3a3a3a] outline-none" />
        <svg viewBox="0 0 64 26" className="h-[26px] w-16">
          <path d="M25 1c1.5 8 3.5 10.5 11 12-7.5 1.5-9.5 4-11 12-1.5-8-3.5-10.5-11-12 7.5-1.5 9.5-4 11-12z" fill="#fbc21d" stroke="#fbc21d" strokeWidth="1" />
          <path d="M47 10.5c.8 4.5 1.8 5.5 5.5 6.5-3.7 1-4.7 2-5.5 6-.8-4-1.800-5-5.500-6 3.700-1 4.700-2 5.500-6z" fill="#fbc84a" />
          <path d="M6.5 17l1 3 3.5 0-2 2.5.5 3.5-3.5-1.5-3 .5 1-3-2-2.5 3.5.3z" fill="#1a9ae8" />
          <circle cx="41" cy="3.5" r="2.2" fill="#e8592b" /><circle cx="60" cy="23.5" r="2.2" fill="#7cc243" />
        </svg>
      </div>
      <TaskIcons />
      <div className="ml-auto flex items-center pr-1">
        <span className="mr-32 text-[12px]">SR</span>
        <svg viewBox="0 0 20 26" className="h-[26px] w-5" fill="none" strokeLinecap="round" strokeWidth="3"><path d="M3 6C1.5 11 2 16 4 20" stroke="#18b6e0" /><path d="M9.5 2C6 9 6 16 8.5 23" stroke="#1793d8" /><path d="M15.5 3C11.5 9 11 17 13 24M18.5 8c-2 4-2.5 8-1.5 12" stroke="#1bb5d8" strokeWidth="2.4" /></svg>
        <span className="ml-2.5 text-[14px]">Match</span>
        <ChevronUp className="ml-6 size-4" strokeWidth={1.5} />
        <svg viewBox="0 0 16 16" className="ml-2 size-4" fill="none" stroke="#fff" strokeWidth="1.2"><rect x="3" y="4.5" width="7" height="7" rx="1" /><path d="M10 7l3-1.5v5L10 9M4 1.5c2-1 5-1 7 0M4 14.5c2 1 5 1 7 0" /></svg>
        <svg viewBox="0 0 16 16" className="ml-2 size-4"><path d="M4.5 13a3.5 3.5 0 0 1-.3-7A4.5 4.5 0 0 1 12.5 7 3 3 0 0 1 13 13z" fill="#e8e8e8" /></svg>
        <svg viewBox="0 0 16 16" className="ml-2 size-4" fill="none" stroke="#fff" strokeWidth="1.1"><path d="M6 5h8.5v7H4V9M14.5 7H16v3M1 3h5v3L3.5 8 1 6zM2 1v2M5 1v2" /></svg>
        <svg viewBox="0 0 16 16" className="ml-2.5 size-4" fill="none" stroke="#ddd" strokeWidth="1.3"><path d="M2 15A12 12 0 0 1 14.5 3M6 15a8.5 8.5 0 0 1 8.5-8.5M9.5 15a5 5 0 0 1 5-5M12.5 15a2 2 0 0 1 2-2" /></svg>
        <div className="ml-2 w-[60px]"><ClockText /></div>
        <svg viewBox="0 0 18 18" className="ml-[18px] size-[18px]"><path d="M1 1h16v12h-5l-3 4-3-4H1z" fill="#fff" /><path d="M4 4.5h10M4 7h10M4 9.5h7" stroke="#1b1d26" /></svg>
        <span className="ml-[17px] h-10 w-px bg-[#6a6c74]" />
      </div>
    </div>
  );
}

function RightTaskbar() {
  return (
    <div className="flex h-10 shrink-0 bg-[#1b1d26] font-['Roboto','Noto_Sans',sans-serif] text-white">
      <StartIcon />
      <button aria-label="Search" className="flex w-12 items-center justify-center"><Search className="size-6 -scale-x-100" /></button>
      <div className="-ml-px flex"><TaskIcons /></div>
      <div className="ml-auto pr-1.5"><ClockText /></div>
    </div>
  );
}

export default function App() {
  return (
    <div className="grid h-screen grid-cols-2 overflow-hidden">
      <div className="flex min-h-0 min-w-0 flex-col"><WorkspaceWindow /><LeftTaskbar /></div>
      <div className="flex min-h-0 min-w-0 flex-col"><BrowserWindow /><RightTaskbar /></div>
    </div>
  );
}
